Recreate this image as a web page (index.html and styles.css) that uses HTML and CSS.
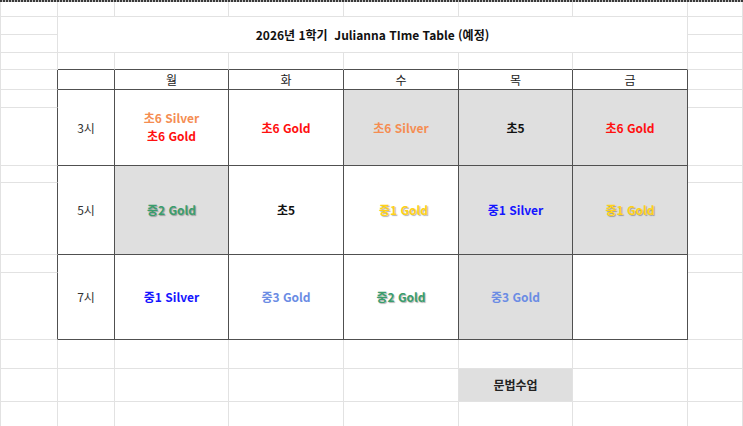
FILE: index.html
```html
<!DOCTYPE html>
<html lang="ko">
<head>
<meta charset="utf-8">
<title>2026년 1학기 Julianna TIme Table</title>
<link rel="stylesheet" href="styles.css">
</head>
<body>
<div class="ants"></div>
<div class="sheet">
  <!-- row 1 -->
  <div class="cell"></div><div class="cell"></div><div class="cell"></div><div class="cell"></div><div class="cell"></div><div class="cell"></div><div class="cell"></div><div class="cell"></div>
  <!-- row 2-3 -->
  <div class="cell"></div>
  <div class="cell title">2026년 1학기&nbsp;&nbsp;Julianna TIme Table (예정)</div>
  <div class="cell"></div>
  <div class="cell"></div>
  <div class="cell"></div>
  <!-- row 4 -->
  <div class="cell"></div>
  <div class="cell db"></div><div class="cell db"></div><div class="cell db"></div><div class="cell db"></div><div class="cell db"></div><div class="cell db"></div>
  <div class="cell"></div>
  <!-- row 5 header -->
  <div class="cell dr"></div>
  <div class="cell t"></div>
  <div class="cell t head">월</div>
  <div class="cell t head">화</div>
  <div class="cell t head">수</div>
  <div class="cell t head">목</div>
  <div class="cell t head">금</div>
  <div class="cell"></div>
  <!-- rows 6-7 : 3시 -->
  <div class="cell dr"></div>
  <div class="cell t span2 time">3시</div>
  <div class="cell t span2 stack"><span class="orange">초6 Silver</span><span class="red">초6 Gold</span></div>
  <div class="cell t span2"><span class="red">초6 Gold</span></div>
  <div class="cell t span2 g"><span class="orange">초6 Silver</span></div>
  <div class="cell t span2 g"><span class="black">초5</span></div>
  <div class="cell t span2 g"><span class="red">초6 Gold</span></div>
  <div class="cell"></div>
  <div class="cell dr"></div>
  <div class="cell"></div>
  <!-- rows 8-9 : 5시 -->
  <div class="cell dr"></div>
  <div class="cell t span2 time">5시</div>
  <div class="cell t span2 g"><span class="green">중2 Gold</span></div>
  <div class="cell t span2"><span class="black">초5</span></div>
  <div class="cell t span2"><span class="yellow nudge">중1 Gold</span></div>
  <div class="cell t span2 g"><span class="blue">중1 Silver</span></div>
  <div class="cell t span2 g"><span class="yellow">중1 Gold</span></div>
  <div class="cell"></div>
  <div class="cell dr"></div>
  <div class="cell"></div>
  <!-- rows 10-11 : 7시 -->
  <div class="cell dr"></div>
  <div class="cell t span2 time">7시</div>
  <div class="cell t span2"><span class="blue">중1 Silver</span></div>
  <div class="cell t span2"><span class="sky">중3 Gold</span></div>
  <div class="cell t span2"><span class="green">중2 Gold</span></div>
  <div class="cell t span2 g"><span class="sky">중3 Gold</span></div>
  <div class="cell t span2"></div>
  <div class="cell"></div>
  <div class="cell dr"></div>
  <div class="cell"></div>
  <!-- row 12 -->
  <div class="cell"></div><div class="cell"></div><div class="cell"></div><div class="cell"></div><div class="cell"></div><div class="cell"></div><div class="cell"></div><div class="cell"></div>
  <!-- row 13 -->
  <div class="cell"></div><div class="cell"></div><div class="cell"></div><div class="cell"></div><div class="cell"></div>
  <div class="cell g note">문법수업</div>
  <div class="cell"></div><div class="cell"></div>
  <!-- row 14 -->
  <div class="cell"></div><div class="cell"></div><div class="cell"></div><div class="cell"></div><div class="cell"></div><div class="cell"></div><div class="cell"></div><div class="cell"></div>
</div>
</body>
</html>
```

FILE: styles.css
```css
html, body {
  margin: 0;
  padding: 0;
  background: #ffffff;
}
body {
  width: 743px;
  height: 426px;
  overflow: hidden;
  font-family: "Noto Sans CJK KR", "Noto Sans", sans-serif;
  font-size: 12px;
  color: #222222;
}
.ants {
  height: 2px;
  background: repeating-linear-gradient(90deg, #3a3a3a 0 2px, #bdbdbd 2px 3px);
}
.sheet {
  display: grid;
  border-left: 1px solid #e2e2e2;
  grid-template-columns: 57px 57px 114px 115px 115px 114px 115px 1fr;
  grid-template-rows: 15px 18px 18px 17px 20px 18px 58px 17px 72px 18px 67px 29px 33px 40px;
}
.cell {
  box-sizing: border-box;
  border-right: 1px solid #e2e2e2;
  border-bottom: 1px solid #e2e2e2;
  display: flex;
  align-items: center;
  justify-content: center;
  white-space: nowrap;
  line-height: 17px;
  padding-bottom: 1px;
}
.title {
  grid-column: span 6;
  grid-row: span 2;
  font-weight: 700;
  color: #111111;
}
.db { border-bottom-color: #505050; }
.dr { border-right-color: #505050; }
.t {
  border-right-color: #505050;
  border-bottom-color: #505050;
}
.span2 { grid-row: span 2; }
.g { background: #dfdfdf; }
.head { color: #222222; }
.time { color: #333333; }
.stack {
  flex-direction: column;
}
.stack span { line-height: 18px; }
.orange, .red, .black, .green, .yellow, .blue, .sky { font-weight: 700; }
.orange { color: #f58d52; }
.red { color: #ff1010; }
.black { color: #111111; }
.green {
  color: #3a9d6c;
  text-shadow: 1px 1px 1px rgba(0, 0, 0, 0.3);
}
.yellow {
  color: #ffd21a;
  text-shadow: 1px 1px 1px rgba(0, 0, 0, 0.3);
}
.blue { color: #1515ff; }
.sky { color: #6b8ce4; }
.nudge { margin-left: 5px; }
.note {
  font-weight: 700;
  color: #222222;
}
```
